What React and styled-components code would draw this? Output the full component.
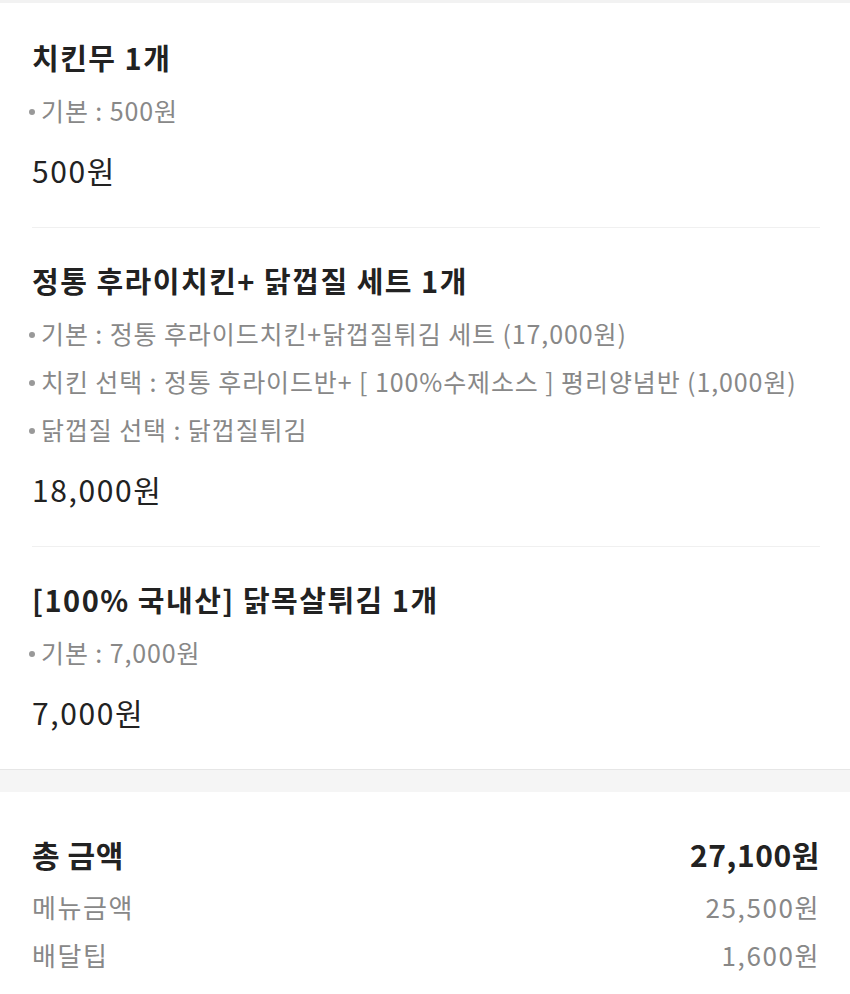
import React from "react";
import styled, { createGlobalStyle } from "styled-components";

const GlobalStyle = createGlobalStyle`
  html, body {
    margin: 0;
    padding: 0;
    background: #fff;
  }
  body {
    font-family: "Noto Sans CJK KR", "Noto Sans", sans-serif;
    color: #222;
  }
`;

const ORDER_ITEMS = [
  {
    name: "치킨무 1개",
    options: ["기본 : 500원"],
    price: "500원",
  },
  {
    name: "정통 후라이치킨+ 닭껍질 세트 1개",
    options: [
      "기본 : 정통 후라이드치킨+닭껍질튀김 세트 (17,000원)",
      "치킨 선택 : 정통 후라이드반+ [ 100%수제소스 ] 평리양념반 (1,000원)",
      "닭껍질 선택 : 닭껍질튀김",
    ],
    price: "18,000원",
  },
  {
    name: "[100% 국내산] 닭목살튀김 1개",
    options: ["기본 : 7,000원"],
    price: "7,000원",
  },
];

function App() {
  return (
    <Page>
      <GlobalStyle />
      <ItemSection>
        {ORDER_ITEMS.map((item, i) => (
          <Item key={i} last={i === ORDER_ITEMS.length - 1}>
            <ItemName>{item.name}</ItemName>
            <OptionList>
              {item.options.map((opt, j) => (
                <Option key={j}>{opt}</Option>
              ))}
            </OptionList>
            <ItemPrice>{item.price}</ItemPrice>
          </Item>
        ))}
      </ItemSection>
      <Gap />
      <Summary>
        <SummaryRow total>
          <span>총 금액</span>
          <span>27,100원</span>
        </SummaryRow>
        <SummaryRow>
          <span>메뉴금액</span>
          <span>25,500원</span>
        </SummaryRow>
        <SummaryRow>
          <span>배달팁</span>
          <span>1,600원</span>
        </SummaryRow>
      </Summary>
    </Page>
  );
}

const Page = styled.div`
  width: 850px;
  height: 994px;
  overflow: hidden;
  border-top: 3px solid #f2f2f2;
  box-sizing: border-box;
`;

const ItemSection = styled.div`
  padding: 0 30px 0 32px;
  border-bottom: 1px solid #e6e6e6;
`;

const Item = styled.div`
  padding: 34px 0 37px;
  border-bottom: ${(p) => (p.last ? "none" : "1px solid #f0f0f0")};

  & + & {
    padding-top: 32px;
  }
`;

const ItemName = styled.div`
  font-size: 29px;
  font-weight: 700;
  line-height: 40px;
  color: #222;
  letter-spacing: 1.5px;
`;

const OptionList = styled.div`
  margin-top: 15px;
  display: flex;
  flex-direction: column;
  gap: 12px;
`;

const Option = styled.div`
  position: relative;
  padding-left: 13px;
  margin-left: -4px;
  font-size: 25px;
  line-height: 36px;
  color: #888;
  letter-spacing: 0.9px;

  &::before {
    content: "";
    position: absolute;
    left: 1px;
    top: 17px;
    width: 6px;
    height: 6px;
    border-radius: 50%;
    background: #999;
  }
`;

const ItemPrice = styled.div`
  margin-top: 22px;
  font-size: 30px;
  line-height: 40px;
  color: #222;
  letter-spacing: 1.6px;
`;

const Gap = styled.div`
  height: 22px;
  background: #f5f5f5;
`;

const Summary = styled.div`
  padding: 42px 30px 0 32px;
  display: flex;
  flex-direction: column;
  gap: 12px;
`;

const SummaryRow = styled.div`
  display: flex;
  justify-content: space-between;
  align-items: center;
  font-size: ${(p) => (p.total ? "30px" : "26px")};
  font-weight: ${(p) => (p.total ? 700 : 400)};
  color: ${(p) => (p.total ? "#222" : "#888")};
  line-height: ${(p) => (p.total ? "40px" : "36px")};
  margin-bottom: ${(p) => (p.total ? "3px" : "0")};
  letter-spacing: ${(p) => (p.total ? "0.6px" : "1.6px")};
`;

export default App;
